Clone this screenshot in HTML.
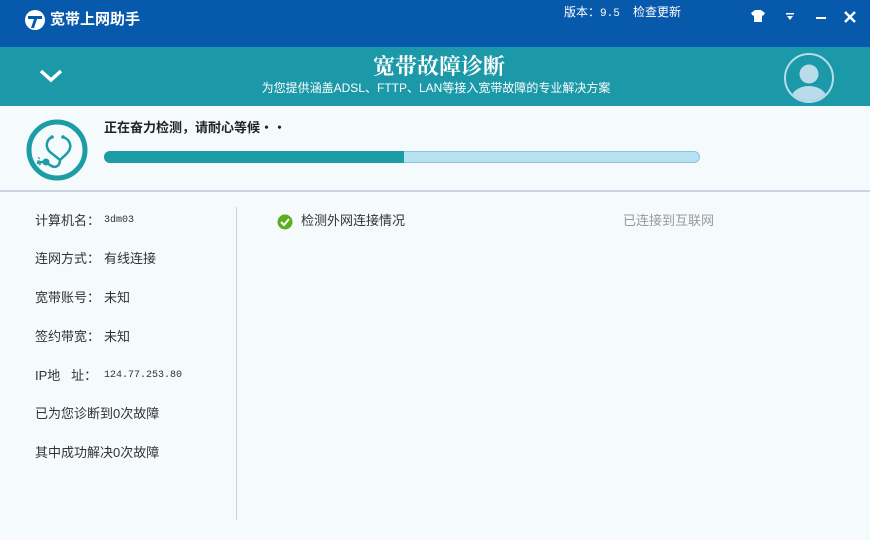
<!DOCTYPE html>
<html><head><meta charset="utf-8"><style>
*{margin:0;padding:0;box-sizing:border-box}
body{width:870px;height:540px;overflow:hidden;background:#f5fafd;font-family:"Liberation Sans","Noto Sans CJK SC",sans-serif;position:relative;color:#333}
.a{position:absolute;white-space:nowrap;line-height:1}
#top{left:0;top:0;width:870px;height:47px;background:#0759ab}
#band{left:0;top:47px;width:870px;height:59px;background:#1b99a8}
.lbl{font-size:13px;color:#333;line-height:16px}
.mono{font-family:"Liberation Mono","Noto Sans CJK SC",monospace;font-size:10px;line-height:16px}
</style></head><body>
<div class="a" id="top"></div>
<div class="a" id="band"></div>
<svg class="a" style="left:24px;top:9px" width="22" height="22" viewBox="0 0 22 22"><circle cx="11" cy="11" r="10" fill="#fff"/><path d="M4 7h14v3h-5l-3 9h-3l3-9H4z" fill="#0759ab"/></svg>
<div class="a" style="left:50px;top:12px;font-size:15px;font-weight:bold;color:#fff">宽带上网助手</div>
<div class="a" style="left:564px;top:6px;font-size:12px;color:#fff">版本：<span class="mono" style="font-size:11px">9.5</span></div>
<div class="a" style="left:633px;top:6px;font-size:12px;color:#fff">检查更新</div>
<svg class="a" style="left:751px;top:10px" width="14" height="12" viewBox="0 0 14 12"><path d="M4 0h6l4 3-2 3-1-1v7H3V5L2 6 0 3z" fill="#fff"/></svg>
<svg class="a" style="left:785px;top:12px" width="10" height="9" viewBox="0 0 10 9"><rect x="1" y="1" width="8" height="1.5" fill="#fff"/><path d="M2 4h6l-3 4z" fill="#fff"/></svg>
<div class="a" style="left:816px;top:17px;width:10px;height:2px;background:#fff"></div>
<svg class="a" style="left:844px;top:11px" width="12" height="12" viewBox="0 0 12 12"><path d="M1 1l10 10M11 1L1 11" stroke="#fff" stroke-width="2.4"/></svg>
<svg class="a" style="left:39px;top:69px" width="24" height="14" viewBox="0 0 24 14"><path d="M2 2l10 9 10-9" stroke="#fff" stroke-width="3.5" fill="none"/></svg>
<div class="a" style="left:0;width:870px;top:55px;text-align:center;font-size:22px;font-weight:bold;color:#fff;font-family:'Noto Serif CJK SC',serif;padding-left:8px">宽带故障诊断</div>
<div class="a" style="left:0;width:870px;top:82px;text-align:center;font-size:12px;color:#fff;padding-left:2px">为您提供涵盖ADSL、FTTP、LAN等接入宽带故障的专业解决方案</div>
<svg class="a" style="left:783px;top:52px" width="52" height="52" viewBox="0 0 52 52"><defs><clipPath id="c"><circle cx="26" cy="26" r="23"/></clipPath></defs><circle cx="26" cy="26" r="24" fill="none" stroke="#b8dcea" stroke-width="2"/><g clip-path="url(#c)" fill="#b8dcea"><circle cx="26" cy="22" r="9.5"/><ellipse cx="26" cy="49" rx="19" ry="15"/></g></svg>
<svg class="a" style="left:26px;top:119px" width="62" height="62" viewBox="0 0 62 62"><circle cx="31" cy="31" r="28" fill="none" stroke="#1c9da5" stroke-width="5"/><path d="M26 18c-6 3-7 10-2 15l10 8c4-4 12-9 10-16-1-4-4-6-7-7M34 41c0 6-5 9-10 5-4-3-8-4-12-2" fill="none" stroke="#1c9da5" stroke-width="2.5" stroke-linecap="round"/><circle cx="26" cy="18" r="1.8" fill="#1c9da5"/><circle cx="37" cy="18" r="1.8" fill="#1c9da5"/><circle cx="20" cy="43" r="3.5" fill="#1c9da5"/><path d="M12 38l2 2M11 42h3M13 46l2-1" stroke="#1c9da5" stroke-width="1"/></svg>
<div class="a" style="left:104px;top:121px;font-size:13px;font-weight:bold;color:#222">正在奋力检测，请耐心等候・・</div>
<div class="a" style="left:104px;top:151px;width:596px;height:12px;border-radius:6px;background:#b7e2f2;border:1px solid #8cc3dc"></div>
<div class="a" style="left:104px;top:151px;width:300px;height:12px;border-radius:6px 0 0 6px;background:#1c9ca5"></div>
<div class="a" style="left:0;top:190px;width:870px;height:2px;background:#c9d5de"></div>
<div class="a" style="left:236px;top:207px;width:1px;height:313px;background:#c9d5de"></div>
<div class="a lbl" style="left:35px;top:213px">计算机名：</div><div class="a mono" style="left:104px;top:213px">3dm03</div>
<div class="a lbl" style="left:35px;top:251px">连网方式：</div><div class="a lbl" style="left:104px;top:251px">有线连接</div>
<div class="a lbl" style="left:35px;top:290px">宽带账号：</div><div class="a lbl" style="left:104px;top:290px">未知</div>
<div class="a lbl" style="left:35px;top:329px">签约带宽：</div><div class="a lbl" style="left:104px;top:329px">未知</div>
<div class="a lbl" style="left:35px;top:368px">IP地&nbsp;&nbsp;&nbsp;址：</div><div class="a mono" style="left:104px;top:368px">124.77.253.80</div>
<div class="a lbl" style="left:35px;top:406px">已为您诊断到0次故障</div>
<div class="a lbl" style="left:35px;top:445px">其中成功解决0次故障</div>
<svg class="a" style="left:277px;top:214px" width="16" height="16" viewBox="0 0 16 16"><circle cx="8" cy="8" r="7.5" fill="#5cae1e"/><path d="M4 8l3 3 5-6" stroke="#fff" stroke-width="2" fill="none"/></svg>
<div class="a lbl" style="left:301px;top:213px">检测外网连接情况</div>
<div class="a lbl" style="left:623px;top:213px;color:#999">已连接到互联网</div>
</body></html>
